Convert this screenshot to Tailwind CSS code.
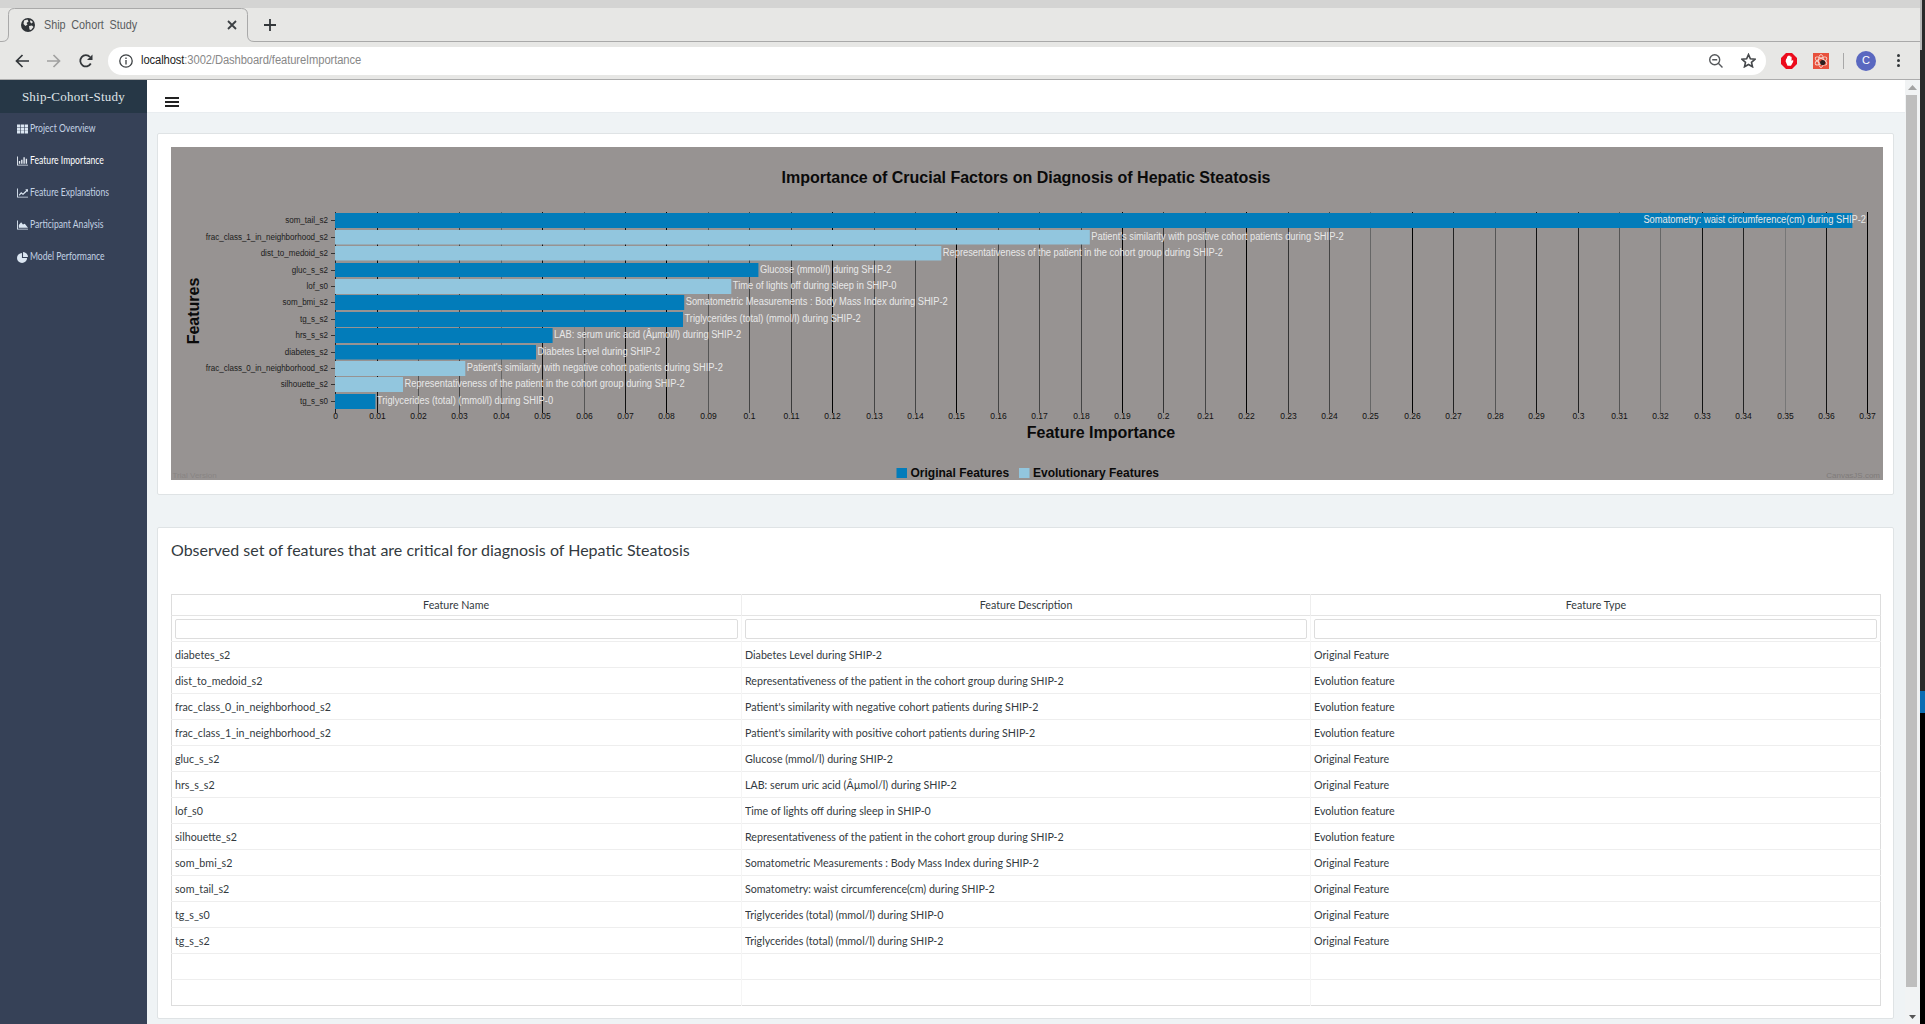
<!DOCTYPE html>
<html lang="en">
<head>
  <meta charset="UTF-8" />
  <title>Ship Cohort Study</title>
  <script src="https://cdn.jsdelivr.net/npm/@tailwindcss/browser@4"></script>
</head>
<body class="w-[1925px] h-[1024px] overflow-hidden bg-[#262626] font-[Lato,sans-serif]">
  <!-- right edge of the desktop behind the window -->
  <div class="flex h-[1024px]">
    <div class="w-[1920px] h-full flex flex-col shrink-0">
      <div class="h-[8px] bg-[#d4d4d3]"></div>

      <!-- tab strip -->
      <div class="relative h-[34px] bg-[#e7e7e5] flex items-center font-['Liberation_Sans',sans-serif]">
        <svg class="absolute left-0 top-0" width="1920" height="34" fill="none" stroke="#a9a9a9" stroke-width="1">
          <path d="M0 33.5H2Q8.5 33.5 8.5 27V6.5Q8.5 .5 14.5 .5H241.5Q247.5 .5 247.5 6.5V27Q247.5 33.5 254 33.5H1920" />
        </svg>
        <svg class="relative ml-[21px]" width="14" height="14" viewBox="0 0 14 14">
          <circle cx="7" cy="7" r="7" fill="#2f3337" />
          <path d="M3 2.5 6.5 1.5 7.5 3.5 5.5 5 6.5 6.5 4.5 8 2.5 6ZM8 8 11 7.5 12.5 9 10 12 8.5 11.5ZM9.5 2 12 4 10.5 5.5 9 4Z" fill="#e7e7e5" />
        </svg>
        <span class="relative ml-[9px] inline-block origin-left scale-x-[.9] text-[12px] text-[#5a5d60] [word-spacing:3px] whitespace-pre">Ship Cohort Study</span>
        <svg class="absolute left-[227px] top-[12px]" width="10" height="10" viewBox="0 0 10 10" stroke="#3c4043" stroke-width="1.8">
          <path d="M1 1 9 9M9 1 1 9" />
        </svg>
        <svg class="absolute left-[264px] top-[11px]" width="12" height="12" viewBox="0 0 12 12" stroke="#33373a" stroke-width="1.8">
          <path d="M6 0V12M0 6H12" />
        </svg>
      </div>

      <!-- toolbar -->
      <div class="h-[38px] bg-[#e7e7e5] border-b border-[#adadad] flex items-center font-['Liberation_Sans',sans-serif]">
        <svg class="ml-[15px]" width="14" height="14" viewBox="0 0 14 14" fill="none" stroke="#33373a" stroke-width="1.7">
          <path d="M14 7H1.5M7.5 1 1.5 7 7.5 13" />
        </svg>
        <svg class="ml-[18px]" width="14" height="14" viewBox="0 0 14 14" fill="none" stroke="#a1a1a0" stroke-width="1.7">
          <path d="M0 7H12.5M6.5 1 12.5 7 6.5 13" />
        </svg>
        <svg class="ml-[18px]" width="14" height="14" viewBox="0 0 14 14" fill="none" stroke="#33373a" stroke-width="1.8">
          <path d="M11.8 9.5A5.6 5.6 0 1 1 11 3" />
          <path d="M13.5 .5V6H8Z" fill="#33373a" stroke="none" />
        </svg>
        <div class="ml-[15px] w-[1658px] h-[28px] bg-white rounded-full flex items-center">
          <svg class="ml-[11px]" width="14" height="14" viewBox="0 0 14 14" fill="none" stroke="#3c4043" stroke-width="1.3">
            <circle cx="7" cy="7" r="6.2" />
            <path d="M7 6V10.5M7 3.4V5" />
          </svg>
          <span class="ml-[8px] inline-block origin-left scale-x-[.895] text-[12.5px] text-[#888] tracking-[-0.1px]"><span class="text-[#222]">localhost</span>:3002/Dashboard/featureImportance</span>
          <svg class="ml-auto" width="14" height="14" viewBox="0 0 14 14" fill="none" stroke="#55585b" stroke-width="1.4">
            <circle cx="5.7" cy="5.7" r="5" />
            <path d="M3.2 5.7H8.2M9.3 9.3 13.5 13.5" />
          </svg>
          <svg class="ml-[18px] mr-[10px]" width="15" height="15" viewBox="0 0 24 24" fill="none" stroke="#45484b" stroke-width="2.6">
            <path d="M12 2.5 15 9.3 22.3 10 16.8 14.9 18.4 22 12 18.3 5.6 22 7.2 14.9 1.7 10 9 9.3Z" />
          </svg>
        </div>
        <svg class="ml-[15px]" width="16" height="16" viewBox="0 0 16 16">
          <path d="M5 0H11L16 5V11L11 16H5L0 11V5Z" fill="#ec0b1c" />
          <path d="M4.6 8.2 5.2 5.4H6V3.6H7V2.8H9.4V3.8H10.6V8L12.2 6.8V8.8L10 12.8H6.5Z" fill="#fff" />
        </svg>
        <svg class="ml-[16px]" width="16" height="16" viewBox="0 0 16 16">
          <rect width="16" height="16" fill="#e8503c" />
          <ellipse cx="8" cy="8" rx="6.5" ry="2.6" fill="none" stroke="#f7d8d0" stroke-width=".9" transform="rotate(30 8 8)" />
          <ellipse cx="8" cy="8" rx="6.5" ry="2.6" fill="none" stroke="#f7d8d0" stroke-width=".9" transform="rotate(-30 8 8)" />
          <ellipse cx="8" cy="8" rx="2.6" ry="6.5" fill="none" stroke="#f7d8d0" stroke-width=".9" />
          <circle cx="9.7" cy="9.5" r="2.6" fill="#2b2020" />
        </svg>
        <div class="ml-[14px] w-px h-[16px] bg-[#a8a8a8]"></div>
        <div class="ml-[12px] w-[20px] h-[20px] rounded-full bg-[#5a68c0] text-white text-[11px] flex items-center justify-center">C</div>
        <div class="ml-[21px] flex flex-col gap-[2px]">
          <div class="w-[3px] h-[3px] rounded-full bg-[#33373a]"></div>
          <div class="w-[3px] h-[3px] rounded-full bg-[#33373a]"></div>
          <div class="w-[3px] h-[3px] rounded-full bg-[#33373a]"></div>
        </div>
      </div>

      <div class="flex flex-1 min-h-0">
        <!-- sidebar -->
        <aside class="w-[147px] shrink-0 bg-[#364157]">
          <div class="h-[33px] bg-[#263746] flex items-center justify-center font-['Liberation_Serif',serif] text-[13px] tracking-[0.25px] text-[#dfe3e6]">Ship-Cohort-Study</div>
          <nav class="text-[10.5px] text-[#c3d2e4]">
            <a class="h-[32px] flex items-center pl-[17px] gap-[2px]">
              <svg width="11" height="10" viewBox="0 0 12 10" fill="#dbe6f2"><path d="M0 0H3.5V3H0ZM4.2 0H7.8V3H4.2ZM8.5 0H12V3H8.5ZM0 3.5H3.5V6.5H0ZM4.2 3.5H7.8V6.5H4.2ZM8.5 3.5H12V6.5H8.5ZM0 7H3.5V10H0ZM4.2 7H7.8V10H4.2ZM8.5 7H12V10H8.5Z" /></svg>
              <span class="inline-block origin-left scale-x-[.82]">Project Overview</span>
            </a>
            <a class="h-[32px] flex items-center pl-[17px] gap-[2px] text-white">
              <svg width="11" height="10" viewBox="0 0 12 10" fill="#e8eef5"><path d="M0 0H1V9H12V10H0ZM2 5H3.5V8H2ZM4.5 3.5H6V8H4.5ZM7 1H8.5V8H7ZM9.5 2.5H11V8H9.5Z" /></svg>
              <span class="inline-block origin-left scale-x-[.82]">Feature Importance</span>
            </a>
            <a class="h-[32px] flex items-center pl-[17px] gap-[2px]">
              <svg width="11" height="10" viewBox="0 0 12 10" fill="#dbe6f2"><path d="M0 0H1V9H12V10H0ZM2 7 4.5 4 6.5 5.5 10 2 9 1H12V4L11 3 6.6 7.2 4.6 5.7 2.8 8Z" /></svg>
              <span class="inline-block origin-left scale-x-[.82]">Feature Explanations</span>
            </a>
            <a class="h-[32px] flex items-center pl-[17px] gap-[2px]">
              <svg width="11" height="10" viewBox="0 0 12 10" fill="#dbe6f2"><path d="M0 0H1V9H12V10H0ZM2 8V5L4.5 2 6.5 4.5 8.5 3.5 12 8Z" /></svg>
              <span class="inline-block origin-left scale-x-[.82]">Participant Analysis</span>
            </a>
            <a class="h-[32px] flex items-center pl-[17px] gap-[2px]">
              <svg width="11" height="11" viewBox="0 0 12 12" fill="#dbe6f2"><path d="M5.4 1A5.5 5.5 0 1 0 11 6.6H5.4ZM6.6 0V5.4H12A5.6 5.6 0 0 0 6.6 0Z" /></svg>
              <span class="inline-block origin-left scale-x-[.82]">Model Performance</span>
            </a>
          </nav>
        </aside>

        <!-- page -->
        <main class="w-[1758px] shrink-0 bg-[#eff3f5]">
          <div class="h-[33px] bg-white border-b border-[#e9edf0] flex items-start pl-[18px] pt-[17px]">
            <div class="flex flex-col gap-[2px]">
              <div class="w-[14px] h-[2px] bg-[#222]"></div>
              <div class="w-[14px] h-[2px] bg-[#222]"></div>
              <div class="w-[14px] h-[2px] bg-[#222]"></div>
            </div>
          </div>

          <div class="pl-[10px] pt-[20px]">
            <section class="w-[1737px] h-[362px] bg-white border border-[#dfe3e5] rounded-[2px] pl-[13px] pt-[13px]">
              <svg id="chart" class="block" width="1712" height="333" viewBox="171 147 1712 333" font-family="'Liberation Sans', sans-serif"></svg>
            </section>

            <section class="w-[1737px] h-[492px] mt-[32px] bg-white border border-[#dfe3e5] rounded-[2px] pl-[13px] pt-[10px]">
              <h2 class="h-[24px] leading-[24px] text-[16px] text-[#333a40]">Observed set of features that are critical for diagnosis of Hepatic Steatosis</h2>
              <table class="mt-[32px] w-[1709px] h-[412px] table-fixed border-collapse border border-[#dddddd] text-[12px] text-[#333a40]">
                <colgroup><col class="w-[570px]" /><col class="w-[569px]" /><col class="w-[570px]" /></colgroup>
                <thead>
                  <tr class="h-[21px] border-b border-[#e4e4e4]">
                    <th class="font-normal text-center border-r border-[#eeeeee]"><span class="inline-block scale-x-[.89]">Feature Name</span></th>
                    <th class="font-normal text-center border-r border-[#eeeeee]"><span class="inline-block scale-x-[.89]">Feature Description</span></th>
                    <th class="font-normal text-center"><span class="inline-block scale-x-[.89]">Feature Type</span></th>
                  </tr>
                  <tr class="h-[26px] border-b border-[#eeeeee]">
                    <th class="px-[3px] border-r border-[#f5f5f5]"><input type="text" class="block w-full h-[20px] border border-[#dddddd] rounded-[2px]" /></th>
                    <th class="px-[3px] border-r border-[#f5f5f5]"><input type="text" class="block w-full h-[20px] border border-[#dddddd] rounded-[2px]" /></th>
                    <th class="px-[3px]"><input type="text" class="block w-full h-[20px] border border-[#dddddd] rounded-[2px]" /></th>
                  </tr>
                </thead>
                <tbody id="rows"></tbody>
              </table>
            </section>
          </div>
        </main>

        <!-- page scrollbar -->
        <div class="w-[15px] shrink-0 bg-[#f1f3f4] flex flex-col items-center relative">
          <svg class="mt-[5px]" width="9" height="5"><path d="M4.5 0 9 5H0Z" fill="#a3a3a3" /></svg>
          <div class="mt-[5px] w-[11px] h-[892px] bg-[#bebebe] -ml-[2px]"></div>
          <svg class="absolute bottom-[5px]" width="7" height="4"><path d="M0 0H7L3.5 4Z" fill="#555" /></svg>
        </div>
      </div>
    </div>

    <div class="w-[5px] shrink-0 flex flex-col">
      <div class="h-[50px] bg-[#2a2a2a] border-l-2 border-[#b8b8b8]"></div>
      <div class="h-[641px] bg-[#2a2a2a]"></div>
      <div class="h-[22px] bg-[#0a6db3]"></div>
      <div class="flex-1 bg-black"></div>
    </div>
  </div>

  <script>
    const features = [
      ['som_tail_s2', 1852.4, 213, 15, 1, 'Somatometry: waist circumference(cm) during SHIP-2'],
      ['frac_class_1_in_neighborhood_s2', 1089.8, 230, 14.5, 0, "Patient's similarity with positive cohort patients during SHIP-2"],
      ['dist_to_medoid_s2', 941.3, 246, 14.5, 0, 'Representativeness of the patient in the cohort group during SHIP-2'],
      ['gluc_s_s2', 758.4, 263, 14, 1, 'Glucose (mmol/l) during SHIP-2'],
      ['lof_s0', 731.3, 279, 15, 0, 'Time of lights off during sleep in SHIP-0'],
      ['som_bmi_s2', 684.2, 295, 15, 1, 'Somatometric Measurements : Body Mass Index during SHIP-2'],
      ['tg_s_s2', 683, 312, 15, 1, 'Triglycerides (total) (mmol/l) during SHIP-2'],
      ['hrs_s_s2', 552.6, 328, 15, 1, 'LAB: serum uric acid (Âµmol/l) during SHIP-2'],
      ['diabetes_s2', 536, 345, 14.5, 1, 'Diabetes Level during SHIP-2'],
      ['frac_class_0_in_neighborhood_s2', 465.3, 361, 15, 0, "Patient's similarity with negative cohort patients during SHIP-2"],
      ['silhouette_s2', 403, 377, 15, 0, 'Representativeness of the patient in the cohort group during SHIP-2'],
      ['tg_s_s0', 375.4, 394, 15, 1, 'Triglycerides (total) (mmol/l) during SHIP-0']
    ];
    const gridColors = ['#222', '#111', '#555', '#444', '#666', '#111', '#555', '#111', '#000', '#555', '#444', '#3a3a3a', '#000', '#444', '#444', '#000', '#444', '#444', '#444', '#000', '#333', '#444', '#000', '#333', '#444', '#666', '#000', '#222', '#555', '#111', '#222', '#555', '#666', '#111', '#222', '#777', '#111', '#000'];

    let svg = '<rect x="171" y="147" width="1712" height="333" fill="#979392"/>';
    svg += '<text x="1026" y="182.5" text-anchor="middle" font-size="16" font-weight="700" fill="#0a0a0a">Importance of Crucial Factors on Diagnosis of Hepatic Steatosis</text>';

    gridColors.forEach((color, i) => {
      const x = Math.round(335.2 + 41.41 * i);
      svg += `<rect x="${x}" y="212" width="1" height="201" fill="${color}"/>`;
      svg += `<text x="${x + 0.5}" y="419" text-anchor="middle" font-size="8.5" fill="#111">${i / 100}</text>`;
    });

    features.forEach(([name, end, y, h, original]) => {
      svg += `<rect x="335" y="${y}" width="${end - 335}" height="${h}" fill="${original ? '#027cba' : '#92c6de'}"/>`;
      svg += `<rect x="331" y="${y + 7}" width="4" height="1" fill="#333"/>`;
      svg += `<text transform="translate(328 ${y + 10}) scale(.893 1)" text-anchor="end" font-size="9" fill="#1c1c1c">${name}</text>`;
    });

    features.forEach(([name, end, y, h, original, desc], i) => {
      const anchor = i === 0 ? 'end' : 'start';
      const x = i === 0 ? 1866 : end + 1.5;
      svg += `<text transform="translate(${x} ${y + 10}) scale(.933 1)" text-anchor="${anchor}" font-size="10" fill="#e8e8e8">${desc}</text>`;
    });

    svg += '<text x="1101" y="437.5" text-anchor="middle" font-size="16" font-weight="700" fill="#0a0a0a">Feature Importance</text>';
    svg += '<text transform="translate(199 311) rotate(-90)" text-anchor="middle" font-size="16" font-weight="700" fill="#0a0a0a">Features</text>';
    svg += '<rect x="896.5" y="468" width="10.5" height="10" fill="#027cba"/>';
    svg += '<text x="910.5" y="476.5" font-size="12" font-weight="700" fill="#0a0a0a">Original Features</text>';
    svg += '<rect x="1019" y="468" width="10.5" height="10" fill="#92c6de"/>';
    svg += '<text x="1033" y="476.5" font-size="12" font-weight="700" fill="#0a0a0a">Evolutionary Features</text>';
    svg += '<text x="172.5" y="478" font-size="8" fill="#888483">Trial Version</text>';
    svg += '<text x="1880" y="478" text-anchor="end" font-size="8" fill="#7f7b7a">CanvasJS.com</text>';
    document.getElementById('chart').innerHTML = svg;

    // table is sorted by feature name
    const original = 'Original Feature', evolution = 'Evolution feature';
    const tableRows = [
      ['diabetes_s2', 'Diabetes Level during SHIP-2', original],
      ['dist_to_medoid_s2', 'Representativeness of the patient in the cohort group during SHIP-2', evolution],
      ['frac_class_0_in_neighborhood_s2', "Patient's similarity with negative cohort patients during SHIP-2", evolution],
      ['frac_class_1_in_neighborhood_s2', "Patient's similarity with positive cohort patients during SHIP-2", evolution],
      ['gluc_s_s2', 'Glucose (mmol/l) during SHIP-2', original],
      ['hrs_s_s2', 'LAB: serum uric acid (Âµmol/l) during SHIP-2', original],
      ['lof_s0', 'Time of lights off during sleep in SHIP-0', evolution],
      ['silhouette_s2', 'Representativeness of the patient in the cohort group during SHIP-2', evolution],
      ['som_bmi_s2', 'Somatometric Measurements : Body Mass Index during SHIP-2', original],
      ['som_tail_s2', 'Somatometry: waist circumference(cm) during SHIP-2', original],
      ['tg_s_s0', 'Triglycerides (total) (mmol/l) during SHIP-0', original],
      ['tg_s_s2', 'Triglycerides (total) (mmol/l) during SHIP-2', original],
      ['', '', ''],
      ['', '', '']
    ];
    document.getElementById('rows').innerHTML = tableRows.map(([name, desc, type]) => `
      <tr class="h-[26px] border-b border-[#eeeeee] last:border-b-0">
        <td class="px-[3px] border-r border-[#f5f5f5]"><span class="inline-block origin-left scale-x-[.89] whitespace-nowrap">${name}</span></td>
        <td class="px-[3px] border-r border-[#f5f5f5]"><span class="inline-block origin-left scale-x-[.89] whitespace-nowrap">${desc}</span></td>
        <td class="px-[3px]"><span class="inline-block origin-left scale-x-[.89] whitespace-nowrap">${type}</span></td>
      </tr>`).join('');
  </script>
</body>
</html>
